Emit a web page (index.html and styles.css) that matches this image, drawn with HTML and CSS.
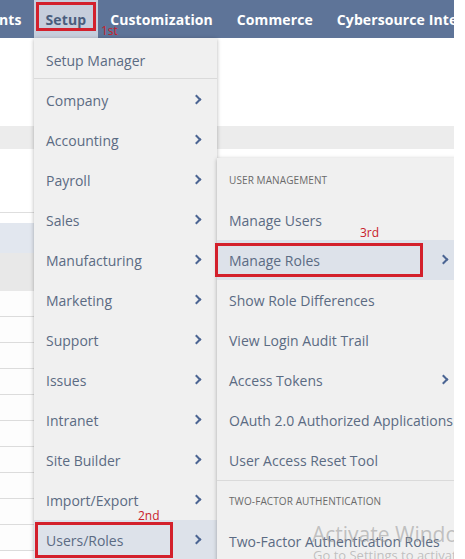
FILE: index.html
```html
<!DOCTYPE html>
<html lang="en">
<head>
    <meta charset="UTF-8">
    <meta name="viewport" content="width=device-width, initial-scale=1.0">
    <title>Setup Menu</title>
    <link rel="stylesheet" href="styles.css">
</head>
<body>
    <div class="screen">
        <nav class="topnav">
            <span class="tab">nts</span>
            <span class="tab active">Setup</span>
            <span class="tab">Customization</span>
            <span class="tab">Commerce</span>
            <span class="tab">Cybersource Integration</span>
        </nav>

        <!-- page behind the menus -->
        <div class="page">
            <div class="band-gray"></div>
            <div class="spacer"></div>
            <div class="band-blue"></div>
            <div class="band-head"></div>
            <div class="row"></div>
            <div class="row"></div>
            <div class="row"></div>
            <div class="row"></div>
            <div class="row"></div>
            <div class="row"></div>
            <div class="row"></div>
            <div class="row"></div>
            <div class="row"></div>
            <div class="row"></div>
        </div>

        <!-- Setup dropdown -->
        <ul class="menu menu-setup">
            <li class="item">Setup Manager</li>
            <li class="divider"></li>
            <li class="item has-sub">Company</li>
            <li class="item has-sub">Accounting</li>
            <li class="item has-sub">Payroll</li>
            <li class="item has-sub">Sales</li>
            <li class="item has-sub">Manufacturing</li>
            <li class="item has-sub">Marketing</li>
            <li class="item has-sub">Support</li>
            <li class="item has-sub">Issues</li>
            <li class="item has-sub">Intranet</li>
            <li class="item has-sub">Site Builder</li>
            <li class="item has-sub">Import/Export</li>
            <li class="item has-sub hover">Users/Roles</li>
        </ul>

        <!-- Users/Roles submenu -->
        <ul class="menu menu-users">
            <li class="heading">User Management</li>
            <li class="item">Manage Users</li>
            <li class="item has-sub hover">Manage Roles</li>
            <li class="item">Show Role Differences</li>
            <li class="item">View Login Audit Trail</li>
            <li class="item has-sub">Access Tokens</li>
            <li class="item">OAuth 2.0 Authorized Applications</li>
            <li class="item">User Access Reset Tool</li>
            <li class="divider"></li>
            <li class="heading">Two-Factor Authentication</li>
            <li class="item">Two-Factor Authentication Roles</li>
        </ul>

        <!-- annotations -->
        <div class="mark mark-setup"></div>
        <span class="note note-1">1st</span>
        <div class="mark mark-users"></div>
        <span class="note note-2">2nd</span>
        <div class="mark mark-roles"></div>
        <span class="note note-3">3rd</span>

        <div class="watermark">
            <div class="wm-title">Activate Windows</div>
            <div class="wm-sub">Go to Settings to activate Windows.</div>
        </div>
    </div>
</body>
</html>
```

FILE: styles.css
```css
* {
    margin: 0;
    padding: 0;
    box-sizing: border-box;
}

body {
    background-color: white;
    font-family: "Open Sans", "Liberation Sans", sans-serif;
    width: 465px;
    height: 559px;
    overflow: hidden;
}

.screen {
    position: relative;
    width: 454px;
    height: 559px;
    overflow: hidden;
    background-color: white;
}

.topnav {
    display: flex;
    height: 38px;
    background-color: #5e7498;
    white-space: nowrap;
}

.tab {
    display: flex;
    align-items: center;
    padding: 0 12px;
    color: white;
    font-weight: bold;
    font-size: 14px;
    letter-spacing: 0.1px;
}

.tab:first-child {
    padding-left: 0;
    margin-left: -1px;
}

.tab.active {
    background-color: #c6cedc;
    color: #4a5d7c;
}

.page .band-gray {
    margin-top: 88px;
    height: 23px;
    background-color: #ececec;
}

.page .spacer {
    height: 64px;
    border-bottom: 1px solid #dedede;
}

.page .band-blue {
    margin-top: 10px;
    height: 30px;
    background-color: #e2e7ef;
}

.page .band-head {
    height: 38px;
    background-color: #e8e8e8;
}

.page .row {
    height: 26px;
    border-bottom: 1px solid #dcdcdc;
    background-color: #fdfdfd;
}

.page .row:first-of-type {
    height: 25px;
}

.menu {
    position: absolute;
    list-style: none;
    background-color: #f0f0f0;
    box-shadow: 0 1px 4px rgba(0, 0, 0, 0.3);
    padding-top: 2px;
}

.menu-setup {
    top: 38px;
    left: 34px;
    width: 183px;
    height: 530px;
}

.menu-users {
    top: 158px;
    left: 217px;
    width: 260px;
    height: 420px;
}

.item {
    position: relative;
    display: flex;
    align-items: center;
    height: 40px;
    padding-left: 12px;
    font-size: 14px;
    color: #5b6b83;
    white-space: nowrap;
}

.item.hover {
    background-color: #dde2ea;
}

.has-sub::after {
    content: "";
    position: absolute;
    top: 16px;
    width: 5px;
    height: 5px;
    border-top: 2.5px solid #4b6593;
    border-right: 2.5px solid #4b6593;
    transform: rotate(45deg);
}

.menu-setup .has-sub::after {
    left: 159px;
}

.menu-users .has-sub::after {
    left: 223px;
}

.divider {
    height: 1px;
    background-color: #dadada;
    margin-left: 0;
}

.menu-setup .divider {
    margin-top: -2px;
    margin-bottom: 1px;
}

.heading {
    display: flex;
    align-items: center;
    height: 40px;
    padding-left: 12px;
    font-size: 10px;
    text-transform: uppercase;
    color: #6a6a6a;
    letter-spacing: 0.1px;
}

.mark {
    position: absolute;
    border: 3px solid #d3202c;
}

.mark-setup {
    top: 2px;
    left: 36px;
    width: 60px;
    height: 29px;
}

.mark-users {
    top: 522px;
    left: 35px;
    width: 138px;
    height: 36px;
}

.mark-roles {
    top: 243px;
    left: 215px;
    width: 208px;
    height: 34px;
}

.note {
    position: absolute;
    font-size: 12px;
    line-height: 12px;
    color: #c8202a;
}

.note-1 {
    top: 25px;
    left: 101px;
}

.note-2 {
    top: 510px;
    left: 138px;
}

.note-3 {
    top: 227px;
    left: 360px;
}

.watermark {
    position: absolute;
    top: 521px;
    left: 312px;
    white-space: nowrap;
    color: rgba(150, 150, 150, 0.55);
}

.wm-title {
    font-size: 21px;
    line-height: 26px;
}

.wm-sub {
    font-size: 13px;
    line-height: 16px;
    padding-left: 1px;
}
```
